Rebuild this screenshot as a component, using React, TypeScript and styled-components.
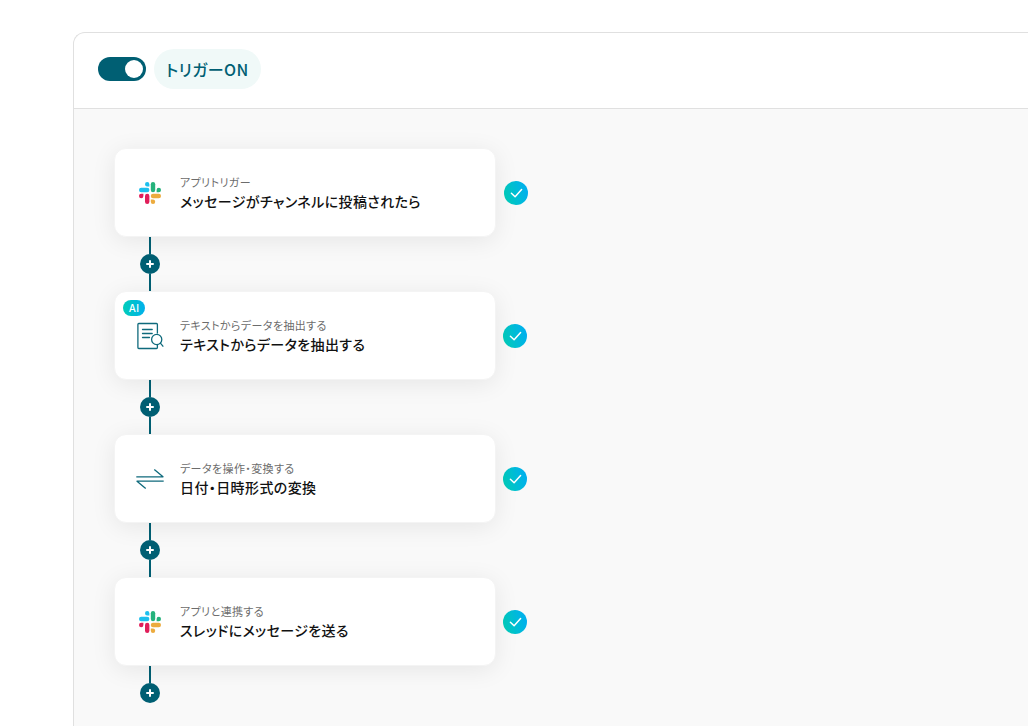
import React, { useState } from 'react';
import styled, { createGlobalStyle } from 'styled-components';

const GlobalStyle = createGlobalStyle`
  *, *::before, *::after { box-sizing: border-box; }
  body {
    margin: 0;
    background: #fff;
    color: #111;
    font-family: "Noto Sans CJK JP", sans-serif;
    font-feature-settings: "palt";
    letter-spacing: 0.025em;
  }
`;

const Page = styled.main`
  min-height: 100vh;
  padding: 32px 0 0 73px;
  display: flex;
`;

const Panel = styled.section`
  flex: 1;
  display: flex;
  flex-direction: column;
  border: 1px solid #e0e0e0;
  border-width: 1px 0 0 1px;
  border-radius: 12px 0 0 0;
  overflow: hidden;
`;

const Header = styled.header`
  display: flex;
  align-items: center;
  gap: 8px;
  padding: 16px 24px 19px;
  border-bottom: 1px solid #e0e0e0;
`;

const Toggle = styled.input`
  appearance: none;
  width: 48px;
  height: 24px;
  margin: 0;
  padding: 3px;
  display: flex;
  justify-content: flex-start;
  border-radius: 12px;
  background: #9aa5a8;
  cursor: pointer;
  &::before {
    content: "";
    width: 18px;
    height: 18px;
    border-radius: 50%;
    background: #fff;
  }
  &:checked {
    justify-content: flex-end;
    background: #005f73;
  }
`;

const TriggerLabel = styled.label`
  padding: 8px 12px;
  border-radius: 20px;
  background: #f0f9f8;
  color: #005f73;
  font-size: 16px;
  font-weight: 500;
  line-height: 24px;
`;

const Canvas = styled.div`
  flex: 1;
  padding: 39px 40px 20px;
  background: #f9f9f9;
`;

const Flow = styled.ol`
  margin: 0;
  padding: 0;
  list-style: none;
`;

const Row = styled.div<{ $gap: number }>`
  display: flex;
  align-items: center;
  gap: ${(p) => p.$gap}px;
`;

const Card = styled.article`
  position: relative;
  display: flex;
  align-items: center;
  gap: 16px;
  flex: 0 1 382px;
  min-height: 89px;
  padding: 16px 21px;
  border: 1px solid #f4f4f4;
  border-radius: 12px;
  background: #fff;
  box-shadow: 0 4px 24px rgba(0, 0, 0, 0.08);
`;

const AiBadge = styled.span`
  position: absolute;
  top: 8px;
  left: 8px;
  width: 22px;
  border-radius: 8px;
  background: linear-gradient(90deg, #00cdb9, #00b0ec);
  color: #fff;
  font-family: Inter, sans-serif;
  font-size: 10px;
  font-weight: 500;
  line-height: 16px;
  text-align: center;
`;

const Icon = styled.svg`
  flex: none;
  display: block;
`;

const Texts = styled.div`
  min-width: 0;
`;

const Kind = styled.p`
  margin: 0;
  color: #6c6c6c;
  font-size: 11px;
  font-weight: 400;
  line-height: 17px;
`;

const Title = styled.h2`
  margin: 0;
  font-size: 14px;
  font-weight: 500;
  line-height: 21px;
`;

const Connector = styled.div<{ $open: boolean }>`
  width: 72px;
  height: ${(p) => (p.$open ? 'auto' : '54px')};
  display: flex;
  flex-direction: column;
  align-items: center;
`;

const Line = styled.span<{ $grow?: boolean }>`
  width: 2px;
  height: 17px;
  flex: ${(p) => (p.$grow ? '1' : 'none')};
  background: #005f73;
`;

const AddButton = styled.button`
  width: 20px;
  height: 20px;
  padding: 0;
  display: grid;
  place-items: center;
  border: 0;
  border-radius: 50%;
  background: #005f73;
  cursor: pointer;
`;

function SlackIcon() {
  return (
    <Icon width="28" height="28" viewBox="0 0 28 28" aria-hidden="true">
      <g fill="#1dbfee">
        <path d="M11.2 3a2.2 2.2 0 1 0 0 4.4h2.2V5.2A2.2 2.2 0 0 0 11.2 3z" />
        <rect x="3" y="8.8" width="10.4" height="4.4" rx="2.2" />
      </g>
      <g fill="#24b27b">
        <path d="M25 11a2.2 2.2 0 1 0-4.4 0v2.2h2.2A2.2 2.2 0 0 0 25 11z" />
        <rect x="14.8" y="3" width="4.4" height="10.2" rx="2.2" />
      </g>
      <g fill="#ecab3e">
        <path d="M17 25a2.2 2.2 0 1 0 0-4.4h-2.2v2.2A2.2 2.2 0 0 0 17 25z" />
        <rect x="14.8" y="14.8" width="10.2" height="4.4" rx="2.2" />
      </g>
      <g fill="#e01e5a">
        <path d="M3 17a2.2 2.2 0 1 0 4.4 0v-2.2H5.2A2.2 2.2 0 0 0 3 17z" />
        <rect x="9" y="14.8" width="4.4" height="10.2" rx="2.2" />
      </g>
    </Icon>
  );
}

function ExtractIcon() {
  return (
    <Icon width="28" height="28" viewBox="0 0 28 28" fill="none" stroke="#0f6a7c" strokeWidth="1.3" strokeLinecap="round" strokeLinejoin="round" aria-hidden="true">
      <path d="M21.4 11V2.4q0-.9-.9-.9H2.8q-.9 0-.9.9v23.2q0 .9.9.9h17.7q.9 0 .9-.9V22.6" />
      <path d="M6.5 7.5h9.7M6.5 11.500h9.700M6.5 15.500h7" />
      <circle cx="20.7" cy="17.5" r="5.1" />
      <path d="M24.4 21.2l2.5 3" />
    </Icon>
  );
}

function ConvertIcon() {
  return (
    <Icon width="28" height="28" viewBox="0 0 28 28" fill="none" stroke="#0f6a7c" strokeWidth="1.3" strokeLinejoin="round" aria-hidden="true">
      <path d="M.3 11.8H27l-8.7-7.4" />
      <path d="M27.7 16.2H1l8.7 7.4" />
    </Icon>
  );
}

function PlusIcon() {
  return (
    <Icon width="8" height="8" viewBox="0 0 8 8" stroke="#fff" strokeWidth="2" strokeLinecap="round" aria-hidden="true">
      <path d="M4 1v6M1 4h6" />
    </Icon>
  );
}

function DoneMark({ id }: { id: string }) {
  return (
    <Icon width="24" height="24" viewBox="0 0 24 24" role="img" aria-label="完了">
      <defs>
        <linearGradient id={id} x1="0" y1="0.65" x2="1" y2="0.35">
          <stop offset="0" stopColor="#00cdb9" />
          <stop offset="1" stopColor="#00aef0" />
        </linearGradient>
      </defs>
      <circle cx="12" cy="12" r="12" fill={`url(#${id})`} />
      <path d="M7.4 12.2l3.7 3.6 6.5-7.3" fill="none" stroke="#fff" strokeWidth="1.5" strokeLinecap="round" strokeLinejoin="round" />
    </Icon>
  );
}

interface Step {
  kind: string;
  title: string;
  icon: React.ReactNode;
  ai?: boolean;
}

const steps: Step[] = [
  { kind: 'アプリトリガー', title: 'メッセージがチャンネルに投稿されたら', icon: <SlackIcon /> },
  { kind: 'テキストからデータを抽出する', title: 'テキストからデータを抽出する', icon: <ExtractIcon />, ai: true },
  { kind: 'データを操作・変換する', title: '日付・日時形式の変換', icon: <ConvertIcon /> },
  { kind: 'アプリと連携する', title: 'スレッドにメッセージを送る', icon: <SlackIcon /> },
];

export default function App() {
  const [on, setOn] = useState(true);
  return (
    <>
      <GlobalStyle />
      <Page lang="ja">
        <Panel>
          <Header>
            <Toggle id="trigger" type="checkbox" role="switch" checked={on} onChange={(e) => setOn(e.target.checked)} />
            <TriggerLabel htmlFor="trigger">{on ? 'トリガーON' : 'トリガーOFF'}</TriggerLabel>
          </Header>
          <Canvas>
            <Flow>
              {steps.map((step, i) => {
                const last = i === steps.length - 1;
                return (
                  <li key={i}>
                    <Row $gap={i === 0 ? 8 : 7}>
                      <Card>
                        {step.ai && <AiBadge>AI</AiBadge>}
                        {step.icon}
                        <Texts>
                          <Kind>{step.kind}</Kind>
                          <Title>{step.title}</Title>
                        </Texts>
                      </Card>
                      <DoneMark id={`done-${i}`} />
                    </Row>
                    <Connector $open={last}>
                      <Line />
                      <AddButton type="button" aria-label="ステップを追加">
                        <PlusIcon />
                      </AddButton>
                      {!last && <Line $grow />}
                    </Connector>
                  </li>
                );
              })}
            </Flow>
          </Canvas>
        </Panel>
      </Page>
    </>
  );
}
